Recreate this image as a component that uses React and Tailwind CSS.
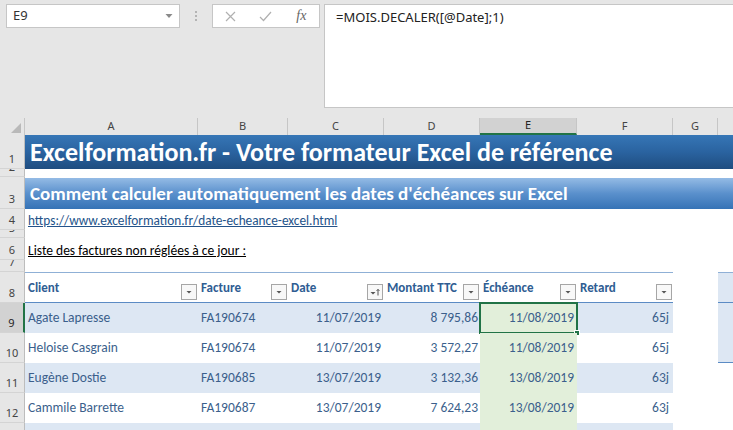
import React from "react";

const UI = "font-['Noto_Sans',sans-serif]";
const SHEET = "font-['Carlito','Lato',sans-serif]";
const COLS = "grid grid-cols-[173px_90px_96px_96px_97px_96px_45px_1fr]";

function Row({ n, h, sel, children }) {
  return (
    <div className={`flex shrink-0 ${h}`}>
      <div
        className={`w-[25px] shrink-0 flex items-end justify-center overflow-hidden border-b border-b-[#d4d4d4] ${UI} text-[11px] leading-[14px] ${
          sel
            ? "bg-[#d2d2d2] border-r-2 border-r-[#217346] text-[#222]"
            : "bg-[#e6e6e6] border-r border-r-[#bdbdbd] text-[#444]"
        }`}
      >
        <span className="pb-[2px]">{n}</span>
      </div>
      <div className="flex-1 min-w-0 h-full">{children}</div>
    </div>
  );
}

function DD({ sort }) {
  return (
    <span className="self-end mb-[2px] mr-[1px] w-[16px] h-[16px] shrink-0 border border-[#a6a6a6] bg-[#f8f8f8] flex items-center justify-center">
      {sort ? (
        <svg width="12" height="12" viewBox="0 0 12 12">
          <path d="M1.5 6h5L4 8.5z" fill="#555" />
          <path d="M9 9.5V3.5M7.6 4.9L9 3.3l1.4 1.6" stroke="#555" strokeWidth="1" fill="none" />
        </svg>
      ) : (
        <svg width="10" height="10" viewBox="0 0 10 10">
          <path d="M2.5 4h5L5 6.5z" fill="#555" />
        </svg>
      )}
    </span>
  );
}

function HeadCell({ label, sort }) {
  return (
    <div className="flex justify-between border-t border-t-[#8fb0d6] border-b border-b-[#5b8bc4] bg-white">
      <span className="self-center pl-[3px] pt-[1px] font-bold text-[13px] text-[#2f5d93]">{label}</span>
      <DD sort={sort} />
    </div>
  );
}

const data = [
  ["Agate Lapresse", "FA190674", "11/07/2019", "8 795,86", "11/08/2019", "65j"],
  ["Heloise Casgrain", "FA190674", "11/07/2019", "3 572,27", "11/08/2019", "65j"],
  ["Eugène Dostie", "FA190685", "13/07/2019", "3 132,36", "13/08/2019", "63j"],
  ["Cammile Barrette", "FA190687", "13/07/2019", "7 624,23", "13/08/2019", "63j"],
];

function DataRow({ r, band, sel, hBlue, hBottom }) {
  const bg = band ? "bg-[#dde7f3]" : "bg-white";
  const cell = "flex items-center px-[3px] pt-[1px] text-[13.5px] text-[#3b5f8c]";
  return (
    <div className={`${COLS} h-full`}>
      <div className={`${cell} ${bg}`}>{r[0]}</div>
      <div className={`${cell} ${bg}`}>{r[1]}</div>
      <div className={`${cell} ${bg} justify-end`}>{r[2]}</div>
      <div className={`${cell} ${bg} justify-end pr-[2px]`}>{r[3]}</div>
      <div className={`${cell} bg-[#e2efda] justify-end relative`}>
        {r[4]}
        {sel && (
          <span className="absolute -left-[1px] -top-[1px] -right-[1px] -bottom-[1px] border-2 border-[#217346]">
            <span className="absolute -right-[4px] -bottom-[4px] w-[6px] h-[6px] bg-[#217346] border border-white" />
          </span>
        )}
      </div>
      <div className={`${cell} ${bg} justify-end pr-[4px]`}>{r[5]}</div>
      <div className="bg-white" />
      <div
        className={`${hBlue ? "bg-[#dde7f3]" : "bg-white"} ${hBottom ? "border-b border-b-[#5b8bc4]" : ""}`}
      />
    </div>
  );
}

export default function App() {
  const colHeads = [
    ["A", "w-[173px]"],
    ["B", "w-[90px]"],
    ["C", "w-[96px]"],
    ["D", "w-[96px]"],
    ["E", "w-[97px]"],
    ["F", "w-[96px]"],
    ["G", "w-[45px]"],
  ];
  return (
    <div className={`w-[733px] h-[430px] overflow-hidden bg-white flex flex-col ${SHEET}`}>
      {/* Formula bar */}
      <div className={`h-[118px] shrink-0 bg-[#e6e6e6] flex items-start pt-[4px] ${UI}`}>
        <div className="ml-[6px] w-[174px] h-[24px] bg-white border border-[#c6c6c6] flex items-center justify-between pl-[6px] pr-[6px] text-[13px] text-[#333]">
          <span>E9</span>
          <svg width="8" height="6" viewBox="0 0 8 6">
            <path d="M0.5 1h7L4 5z" fill="#8a8a8a" />
          </svg>
        </div>
        <div className="w-[32px] h-[24px] flex flex-col items-center justify-center gap-[2px]">
          <span className="w-[2px] h-[2px] bg-[#b4b4b4]" />
          <span className="w-[2px] h-[2px] bg-[#b4b4b4]" />
          <span className="w-[2px] h-[2px] bg-[#b4b4b4]" />
        </div>
        <div className="w-[108px] h-[24px] bg-white border border-[#c6c6c6] flex items-center">
          <span className="w-[36px] flex justify-center">
            <svg width="11" height="11" viewBox="0 0 11 11">
              <path d="M1 1l9 9M10 1l-9 9" stroke="#b0b0b0" strokeWidth="1.2" />
            </svg>
          </span>
          <span className="w-[36px] flex justify-center">
            <svg width="13" height="11" viewBox="0 0 13 11">
              <path d="M1 6l3.5 3.5L12 1" stroke="#b0b0b0" strokeWidth="1.2" fill="none" />
            </svg>
          </span>
          <span className="w-[36px] flex justify-center font-['Liberation_Serif',serif] italic text-[14px] text-[#666] leading-none">
            fx
          </span>
        </div>
        <div className="ml-[4px] flex-1 h-[104px] bg-white border border-[#c6c6c6] border-r-0 pl-[11px] pt-[3px] text-[13px] text-[#222]">
          =MOIS.DECALER([@Date];1)
        </div>
      </div>

      {/* Column headers */}
      <div className={`h-[17px] shrink-0 flex bg-[#e6e6e6] ${UI} text-[11px] text-[#444]`}>
        <div className="w-[25px] shrink-0 flex items-end justify-end pr-[3px] pb-[2px] border-r border-r-[#c6c6c6]">
          <svg width="10" height="10" viewBox="0 0 10 10">
            <path d="M10 0V10H0z" fill="#b9b9b9" />
          </svg>
        </div>
        {colHeads.map(([l, w]) => (
          <div
            key={l}
            className={`${w} shrink-0 flex items-center justify-center border-r border-r-[#c6c6c6] ${
              l === "E" ? "bg-[#d2d2d2] border-b-2 border-b-[#217346] text-[#222]" : ""
            }`}
          >
            {l}
          </div>
        ))}
        <div className="flex-1" />
      </div>

      {/* Row 1 */}
      <Row n="1" h="h-[34px]">
        <div className="h-full bg-linear-to-b from-[#3676b6] via-[#2a63a0] to-[#1f4d80] flex items-center pl-[5px] text-white font-bold text-[26px] leading-none whitespace-nowrap">
          Excelformation.fr - Votre formateur Excel de référence
        </div>
      </Row>
      <Row n="2" h="h-[8px]" />
      <Row n="3" h="h-[32px]">
        <div className="h-full pt-[1px]">
          <div className="h-full bg-linear-to-b from-[#94bbe5] via-[#5a90cc] to-[#3573b6] flex items-center pl-[5px] text-white font-bold text-[19px] leading-none whitespace-nowrap">
            Comment calculer automatiquement les dates d'échéances sur Excel
          </div>
        </div>
      </Row>
      <Row n="4" h="h-[21px]">
        <div className="h-full flex items-end pl-[3px] pb-[2px] text-[13.3px] leading-[15px] text-[#24538a] underline">
          https://www.excelformation.fr/date-echeance-excel.html
        </div>
      </Row>
      <Row n="5" h="h-[8px]" />
      <Row n="6" h="h-[22px]">
        <div className="h-full flex items-end pl-[3px] pb-[2px] text-[13.5px] leading-[15px] text-black underline">
          Liste des factures non réglées à ce jour :
        </div>
      </Row>
      <Row n="7" h="h-[12px]" />
      <Row n="8" h="h-[31px]">
        <div className={`${COLS} h-full`}>
          <HeadCell label="Client" />
          <HeadCell label="Facture" />
          <HeadCell label="Date" sort />
          <HeadCell label="Montant TTC" />
          <HeadCell label="Échéance" />
          <HeadCell label="Retard" />
          <div className="bg-white" />
          <div className="bg-[#dde7f3] border-t border-t-[#8fb0d6] border-b border-b-[#5b8bc4]" />
        </div>
      </Row>
      <Row n="9" h="h-[30px]" sel>
        <DataRow r={data[0]} band sel hBlue />
      </Row>
      <Row n="10" h="h-[30px]">
        <DataRow r={data[1]} hBlue hBottom />
      </Row>
      <Row n="11" h="h-[30px]">
        <DataRow r={data[2]} band />
      </Row>
      <Row n="12" h="h-[30px]">
        <DataRow r={data[3]} />
      </Row>
      <Row n="13" h="h-[30px]">
        <DataRow r={["", "", "", "", "", ""]} band />
      </Row>
    </div>
  );
}
